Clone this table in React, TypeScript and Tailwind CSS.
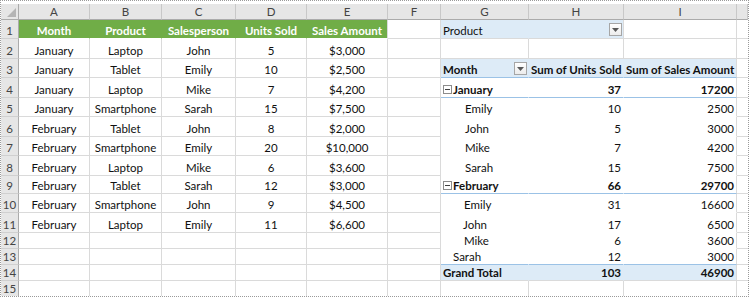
import React from "react";

type Cell = { text?: React.ReactNode; cls?: string };

const base =
	"flex items-end overflow-hidden whitespace-nowrap border-r border-b border-[#dadada]";

const letters = ["A", "B", "C", "D", "E", "F", "G", "H", "I", ""];

const data = [
	["January", "Laptop", "John", "5", "$3,000"],
	["January", "Tablet", "Emily", "10", "$2,500"],
	["January", "Laptop", "Mike", "7", "$4,200"],
	["January", "Smartphone", "Sarah", "15", "$7,500"],
	["February", "Tablet", "John", "8", "$2,000"],
	["February", "Smartphone", "Emily", "20", "$10,000"],
	["February", "Laptop", "Mike", "6", "$3,600"],
	["February", "Tablet", "Sarah", "12", "$3,000"],
	["February", "Smartphone", "John", "9", "$4,500"],
	["February", "Laptop", "Emily", "11", "$6,600"],
];

function Dropdown() {
	return (
		<span className="flex items-center justify-center w-[13px] h-[13px] mb-[2px] border border-[#a6a6a6] bg-gradient-to-b from-white to-[#ececec]">
			<svg width="7" height="4" viewBox="0 0 7 4">
				<path d="M0 0h7L3.5 4z" fill="#595959" />
			</svg>
		</span>
	);
}

function Collapse() {
	return (
		<span className="flex items-center justify-center w-[9px] h-[9px] mr-[1px] mb-[3px] border border-[#8c8c8c] bg-white">
			<span className="w-[5px] h-[1px] bg-[#404040]" />
		</span>
	);
}

const pivot: { label: string; pad: string; units: string; sales: string; kind: "group" | "item" | "total" }[] = [
	{ label: "January", pad: "pl-[2px]", units: "37", sales: "17200", kind: "group" },
	{ label: "Emily", pad: "pl-[24px]", units: "10", sales: "2500", kind: "item" },
	{ label: "John", pad: "pl-[24px]", units: "5", sales: "3000", kind: "item" },
	{ label: "Mike", pad: "pl-[24px]", units: "7", sales: "4200", kind: "item" },
	{ label: "Sarah", pad: "pl-[24px]", units: "15", sales: "7500", kind: "item" },
	{ label: "February", pad: "pl-[2px]", units: "66", sales: "29700", kind: "group" },
	{ label: "Emily", pad: "pl-[23px]", units: "31", sales: "16600", kind: "item" },
	{ label: "John", pad: "pl-[22px]", units: "17", sales: "6500", kind: "item" },
	{ label: "Mike", pad: "pl-[23px]", units: "6", sales: "3600", kind: "item" },
	{ label: "Sarah", pad: "pl-[12px]", units: "12", sales: "3000", kind: "item" },
	{ label: "Grand Total", pad: "pl-[2px]", units: "103", sales: "46900", kind: "total" },
];

function rowCells(r: number): Cell[] {
	const hdr: Cell = {
		text: r,
		cls: "justify-center bg-[#e6e6e6] text-[#444] border-r-[#ababab] border-b-[#d0d0d0] text-[11.5px]",
	};
	let left: Cell[] = [];
	if (r === 1) {
		left = ["Month", "Product", "Salesperson", "Units Sold", "Sales Amount"].map((t) => ({
			text: t,
			cls: "justify-center bg-[#70ad47] text-white font-bold border-r-[#70ad47] border-b-white",
		}));
		left[4].cls = "justify-center bg-[#70ad47] text-white font-bold border-b-white";
	} else if (r >= 2 && r <= 11) {
		left = data[r - 2].map((t) => ({ text: t, cls: "justify-center" }));
	} else {
		left = [{}, {}, {}, {}, {}];
	}
	const f: Cell = {};
	let g: Cell = {};
	let h: Cell = {};
	let i: Cell = {};
	if (r === 1) {
		g = { text: "Product", cls: "pl-[2px] bg-[#ddebf7] border-r-[#ddebf7]" };
		h = { text: <Dropdown />, cls: "justify-end pr-[1px] bg-[#ddebf7]" };
	} else if (r === 3) {
		g = {
			text: (
				<>
					<span className="flex-1">Month</span>
					<Dropdown />
				</>
			),
			cls: "pl-[2px] pr-[1px] font-bold bg-[#ddebf7] border-r-[#ddebf7] border-b-[#9bc2e6]",
		};
		h = { text: "Sum of Units Sold", cls: "pl-[2px] font-bold bg-[#ddebf7] border-r-[#ddebf7] border-b-[#9bc2e6]" };
		i = { text: "Sum of Sales Amount", cls: "pl-[2px] font-bold bg-[#ddebf7] border-b-[#9bc2e6]" };
	} else if (r >= 4 && r <= 14) {
		const p = pivot[r - 4];
		const next = pivot[r - 3];
		let bottom = "border-b-white";
		if (p.kind === "group" || (next && next.kind === "total")) bottom = "border-b-[#9bc2e6]";
		if (p.kind === "total") bottom = "border-b-[#dadada]";
		const bold = p.kind === "item" ? "" : "font-bold";
		const bg = p.kind === "total" ? "bg-[#ddebf7] border-r-[#ddebf7]" : "border-r-white";
		const bgLast = p.kind === "total" ? "bg-[#ddebf7]" : "";
		g = {
			text:
				p.kind === "group" ? (
					<>
						<Collapse />
						{p.label}
					</>
				) : (
					p.label
				),
			cls: `${p.pad} ${bold} ${bg} ${bottom}`,
		};
		h = { text: p.units, cls: `justify-end pr-[2px] ${bold} ${bg} ${bottom}` };
		i = { text: p.sales, cls: `justify-end pr-[2px] ${bold} ${bgLast} ${bottom}` };
	}
	const j: Cell = { cls: "border-r-0" };
	return [hdr, ...left, f, g, h, i, j];
}

export default function App() {
	const rows = Array.from({ length: 15 }, (_, k) => k + 1);
	return (
		<div className="w-[750px] h-[298px] bg-white">
			<div className="w-[749px] h-[297px] border border-dotted border-[#9a9a9a] pt-[3px] overflow-hidden font-[Lato,sans-serif] text-[11.5px] text-[#111] leading-[14px]">
				<div className="grid grid-cols-[18px_71px_72px_74px_71px_81px_53px_88px_95px_113px_11px] grid-rows-[16px_19px_20px_19px_20px_19px_20px_19px_20px_18px_19px_20px_16px_16px_16px_16px]">
					{/* column headers */}
					<div className="relative bg-[#e6e6e6] border-r border-b border-r-[#ababab] border-b-[#ababab]">
						<svg className="absolute right-[2px] bottom-[2px]" width="9" height="9" viewBox="0 0 9 9">
							<path d="M9 0v9H0z" fill="#b4b4b4" />
						</svg>
					</div>
					{letters.map((l, k) => (
						<div
							key={l + k}
							className="flex items-center justify-center bg-[#e6e6e6] text-[#444] text-[11.5px] border-r border-b border-r-[#c8c8c8] border-b-[#ababab]"
						>
							{l}
						</div>
					))}
					{rows.map((r) =>
						rowCells(r).map((c, k) => (
							<div key={`${r}-${k}`} className={`${base} ${c.cls ?? ""}`}>
								{c.text}
							</div>
						))
					)}
				</div>
			</div>
		</div>
	);
}
